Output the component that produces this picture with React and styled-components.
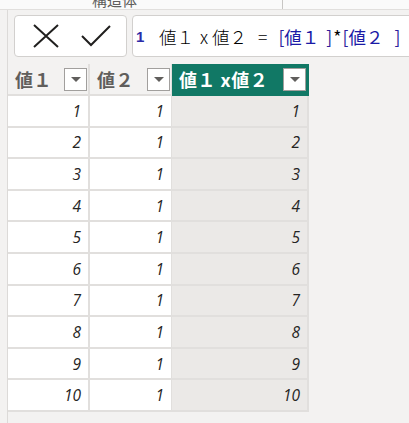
import React from 'react';
import styled, { createGlobalStyle } from 'styled-components';

const GlobalStyle = createGlobalStyle`
  html, body {
    margin: 0;
    padding: 0;
    background: #f3f2f1;
    font-family: "Noto Sans CJK JP", "Noto Sans", sans-serif;
    overflow: hidden;
  }
`;

const rows = [1, 2, 3, 4, 5, 6, 7, 8, 9, 10];

const columns = [
  { name: '値１', width: 82, border: 2 },
  { name: '値２', width: 82, border: 1 },
  { name: '値１ x値２', width: 137, border: 2, calc: true },
];

const App = () => {
  return (
    <>
      <GlobalStyle />
      <TopStrip>
        <StripLabel>構造体</StripLabel>
        <StripDivider />
      </TopStrip>
      <Body>
        <FormulaBar>
          <ButtonBox>
            <IconButton>
              <svg width="26" height="24" viewBox="0 0 26 24">
                <path d="M1 1 L25 23 M25 1 L1 23" stroke="#201f1e" strokeWidth="2" fill="none" />
              </svg>
            </IconButton>
            <IconButton>
              <svg width="30" height="22" viewBox="0 0 30 22">
                <path d="M1 11 L10 20 L29 1" stroke="#201f1e" strokeWidth="2" fill="none" />
              </svg>
            </IconButton>
          </ButtonBox>
          <FormulaBox>
            <LineNo>1</LineNo>
            <Formula>
              値１<Times>x</Times>値２<Op>=</Op>
              <Ref><Br>[</Br>値１<Br $gap={7}>]</Br></Ref>
              <Star>*</Star>
              <Ref><Br>[</Br>値２<Br $gap={11}>]</Br></Ref>
            </Formula>
          </FormulaBox>
        </FormulaBar>
        <Table>
          <HeaderRow>
            {columns.map((col) => (
              <HeaderCell key={col.name} $w={col.width} $b={col.border} $active={col.calc}>
                <HeaderText $active={col.calc}>{col.name}</HeaderText>
                <Dropdown>
                  <Caret />
                </Dropdown>
              </HeaderCell>
            ))}
          </HeaderRow>
          {rows.map((n) => (
            <Row key={n}>
              <Cell $w={82} $b={2}>{n}</Cell>
              <Cell $w={82} $b={1}>1</Cell>
              <Cell $w={137} $b={2} $calc>{n}</Cell>
            </Row>
          ))}
        </Table>
      </Body>
    </>
  );
};

export default App;

const TopStrip = styled.div`
  height: 9px;
  background: #fafafa;
  border-bottom: 1px solid #e1dfdd;
  display: flex;
  overflow: hidden;
`;

const StripLabel = styled.div`
  width: 190px;
  padding-left: 92px;
  font-size: 15px;
  line-height: 15px;
  margin-top: -8px;
  color: #605e5c;
`;

const StripDivider = styled.div`
  width: 1px;
  background: #c8c6c4;
`;

const Body = styled.div`
  margin-left: 7px;
  border-left: 1px solid #dcdad8;
  min-height: 413px;
`;

const FormulaBar = styled.div`
  display: flex;
  gap: 5px;
  padding: 5px 0 0 6px;
  height: 42px;
`;

const ButtonBox = styled.div`
  flex: none;
  width: 113px;
  box-sizing: border-box;
  background: #ffffff;
  border: 1px solid #d2d0ce;
  border-radius: 4px;
  display: flex;
  align-items: center;
  padding-left: 18px;
  gap: 22px;
`;

const IconButton = styled.div`
  display: flex;
  align-items: center;
`;

const FormulaBox = styled.div`
  flex: 1;
  margin-right: -20px;
  background: #ffffff;
  border: 1px solid #d2d0ce;
  border-radius: 4px;
  display: flex;
  align-items: center;
  padding-left: 3px;
  white-space: nowrap;
`;

const LineNo = styled.span`
  font-family: "Liberation Sans", sans-serif;
  font-size: 15px;
  font-weight: 700;
  color: #2b2ba8;
  width: 23px;
`;

const Formula = styled.span`
  display: flex;
  align-items: center;
  font-size: 17.5px;
  font-weight: 300;
  color: #000000;
`;

const Times = styled.span`
  margin: 0 4px 0 6px;
`;

const Op = styled.span`
  margin: 0 11px 0 11px;
`;

const Ref = styled.span`
  color: #1a1aa6;
  font-weight: 400;
`;

const Br = styled.span`
  color: #2e1f9e;
  margin-left: ${(p) => p.$gap || 0}px;
`;

const Star = styled.span`
  font-weight: 400;
  margin: 0 1px;
`;

const Table = styled.div`
  margin-top: 7px;
  width: 301px;
`;

const HeaderRow = styled.div`
  display: flex;
  height: 32px;
`;

const HeaderCell = styled.div`
  width: ${(p) => p.$w}px;
  box-sizing: border-box;
  border-right: ${(p) => p.$b}px solid ${(p) => (p.$active ? '#117865' : '#e1dfdd')};
  border-bottom: 2px solid ${(p) => (p.$active ? '#117865' : '#e1dfdd')};
  background: ${(p) => (p.$active ? '#117865' : '#f3f2f1')};
  display: flex;
  align-items: center;
  justify-content: space-between;
  padding: 0 1px 0 7px;
`;

const HeaderText = styled.span`
  font-size: 18px;
  font-weight: 700;
  letter-spacing: 0.5px;
  color: ${(p) => (p.$active ? '#ffffff' : '#605e5c')};
  white-space: nowrap;
`;

const Dropdown = styled.div`
  width: 23px;
  height: 23px;
  box-sizing: border-box;
  background: #ffffff;
  border: 1px solid #a19f9d;
  display: flex;
  align-items: center;
  justify-content: center;
`;

const Caret = styled.div`
  width: 0;
  height: 0;
  border-left: 5px solid transparent;
  border-right: 5px solid transparent;
  border-top: 5px solid #605e5c;
  margin-top: 1px;
`;

const Row = styled.div`
  display: flex;
  height: 31.6px;
`;

const Cell = styled.div`
  width: ${(p) => p.$w}px;
  box-sizing: border-box;
  border-right: ${(p) => p.$b}px solid #e1dfdd;
  border-bottom: 2px solid #e1dfdd;
  background: ${(p) => (p.$calc ? '#ebe9e7' : '#ffffff')};
  display: flex;
  align-items: center;
  justify-content: flex-end;
  padding-right: 7px;
  font-family: "Open Sans", "Noto Sans", sans-serif;
  font-style: italic;
  font-size: 15.5px;
  color: #252423;
`;
